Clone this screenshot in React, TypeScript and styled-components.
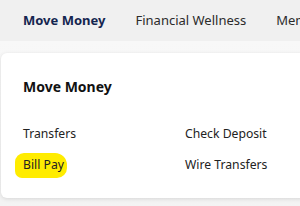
import styled, { createGlobalStyle } from 'styled-components';

const GlobalStyle = createGlobalStyle`
  html, body {
    margin: 0;
    padding: 0;
    background: #f3f3f3;
    overflow: hidden;
  }
  body {
    font-family: 'Noto Sans', 'Open Sans', sans-serif;
  }
`;

const Page = styled.div`
  width: 300px;
  height: 206px;
  overflow: hidden;
`;

const NavBar = styled.nav`
  display: flex;
  gap: 30px;
  height: 41px;
  padding-left: 23px;
  align-items: center;
  background: #f0f0f0;
  white-space: nowrap;
  overflow: hidden;
`;

const NavItem = styled.span<{ $active?: boolean }>`
  font-size: 13px;
  font-weight: ${(p) => (p.$active ? 700 : 400)};
  color: ${(p) => (p.$active ? '#14254f' : '#2b2b2b')};
  padding-bottom: 2px;
`;

const Dropdown = styled.section`
  padding: 12px 0 0 1px;
  background: linear-gradient(#f8f8f8, #f3f3f3);
  height: 153px;
  overflow: hidden;
`;

const Card = styled.div`
  width: 340px;
  height: 145px;
  box-sizing: border-box;
  background: #fff;
  border-radius: 6px;
  box-shadow: 0 1px 4px rgba(0, 0, 0, 0.12);
  padding: 24px 0 0 22px;
`;

const Title = styled.h2`
  margin: 0 0 28px;
  font-size: 14px;
  font-weight: 700;
  color: #111;
`;

const LinkGrid = styled.div`
  display: grid;
  grid-template-columns: 162px auto;
  row-gap: 11px;
`;

const MenuLink = styled.a<{ $marked?: boolean }>`
  position: relative;
  justify-self: start;
  font-size: 12.2px;
  color: #222;
  text-decoration: none;
  line-height: 20px;

  ${(p) =>
    p.$marked &&
    `
    &::before {
      content: '';
      position: absolute;
      left: -8px;
      right: -3px;
      top: -2px;
      bottom: -3px;
      background: #ffec00;
      border-radius: 9px 12px 10px 7px;
      z-index: 0;
    }
  `}
`;

const LinkText = styled.span`
  position: relative;
  z-index: 1;
`;

const links = [
  { label: 'Transfers' },
  { label: 'Check Deposit' },
  { label: 'Bill Pay', marked: true },
  { label: 'Wire Transfers' },
];

export default function App() {
  return (
    <Page>
      <GlobalStyle />
      <NavBar>
        <NavItem $active>Move Money</NavItem>
        <NavItem>Financial Wellness</NavItem>
        <NavItem>Member Services</NavItem>
      </NavBar>
      <Dropdown>
        <Card>
          <Title>Move Money</Title>
          <LinkGrid>
            {links.map((l) => (
              <MenuLink key={l.label} href="#" $marked={l.marked}>
                <LinkText>{l.label}</LinkText>
              </MenuLink>
            ))}
          </LinkGrid>
        </Card>
      </Dropdown>
    </Page>
  );
}
